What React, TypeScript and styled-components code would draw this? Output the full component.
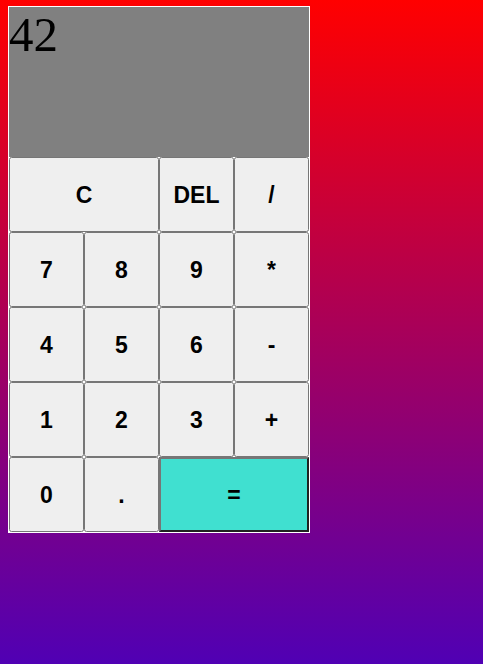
import React from "react";
import styled, { createGlobalStyle } from "styled-components";

const Global = createGlobalStyle`
  html, body { margin: 0; padding: 0; }
  body {
    min-height: 100vh;
    background: linear-gradient(to bottom, #ff0000, #5000b4);
    font-family: "Liberation Serif", "Times New Roman", serif;
  }
`;

const Page = styled.div`
  padding: 6px 8px;
`;

const Calculator = styled.div`
  width: 300px;
  border: 1px solid #ffffff;
  background: #ffffff;
  display: flex;
  flex-direction: column;
`;

const Display = styled.div`
  height: 150px;
  background: #808080;
  color: #000;
  font-family: "Liberation Serif", "Times New Roman", serif;
  font-size: 49px;
  line-height: 1.15;
`;

const Keys = styled.div`
  display: grid;
  grid-template-columns: repeat(4, 75px);
  grid-auto-rows: 75px;
`;

const Key = styled.button<{ $span?: number; $accent?: boolean }>`
  grid-column: span ${(p) => p.$span ?? 1};
  margin: 0;
  padding-top: 2px;
  font-family: "Liberation Sans", Arial, sans-serif;
  font-size: 23px;
  font-weight: bold;
  color: #000;
  ${(p) => (p.$accent ? "background-color: #40e0d0; border: 2px outset #767676;" : "")}
`;

const keys: { label: string; span?: number; accent?: boolean }[] = [
  { label: "C", span: 2 },
  { label: "DEL" },
  { label: "/" },
  { label: "7" },
  { label: "8" },
  { label: "9" },
  { label: "*" },
  { label: "4" },
  { label: "5" },
  { label: "6" },
  { label: "-" },
  { label: "1" },
  { label: "2" },
  { label: "3" },
  { label: "+" },
  { label: "0" },
  { label: "." },
  { label: "=", span: 2, accent: true },
];

export default function App() {
  return (
    <>
      <Global />
      <Page>
        <Calculator>
          <Display>42</Display>
          <Keys>
            {keys.map((k) => (
              <Key key={k.label} $span={k.span} $accent={k.accent}>
                {k.label}
              </Key>
            ))}
          </Keys>
        </Calculator>
      </Page>
    </>
  );
}
